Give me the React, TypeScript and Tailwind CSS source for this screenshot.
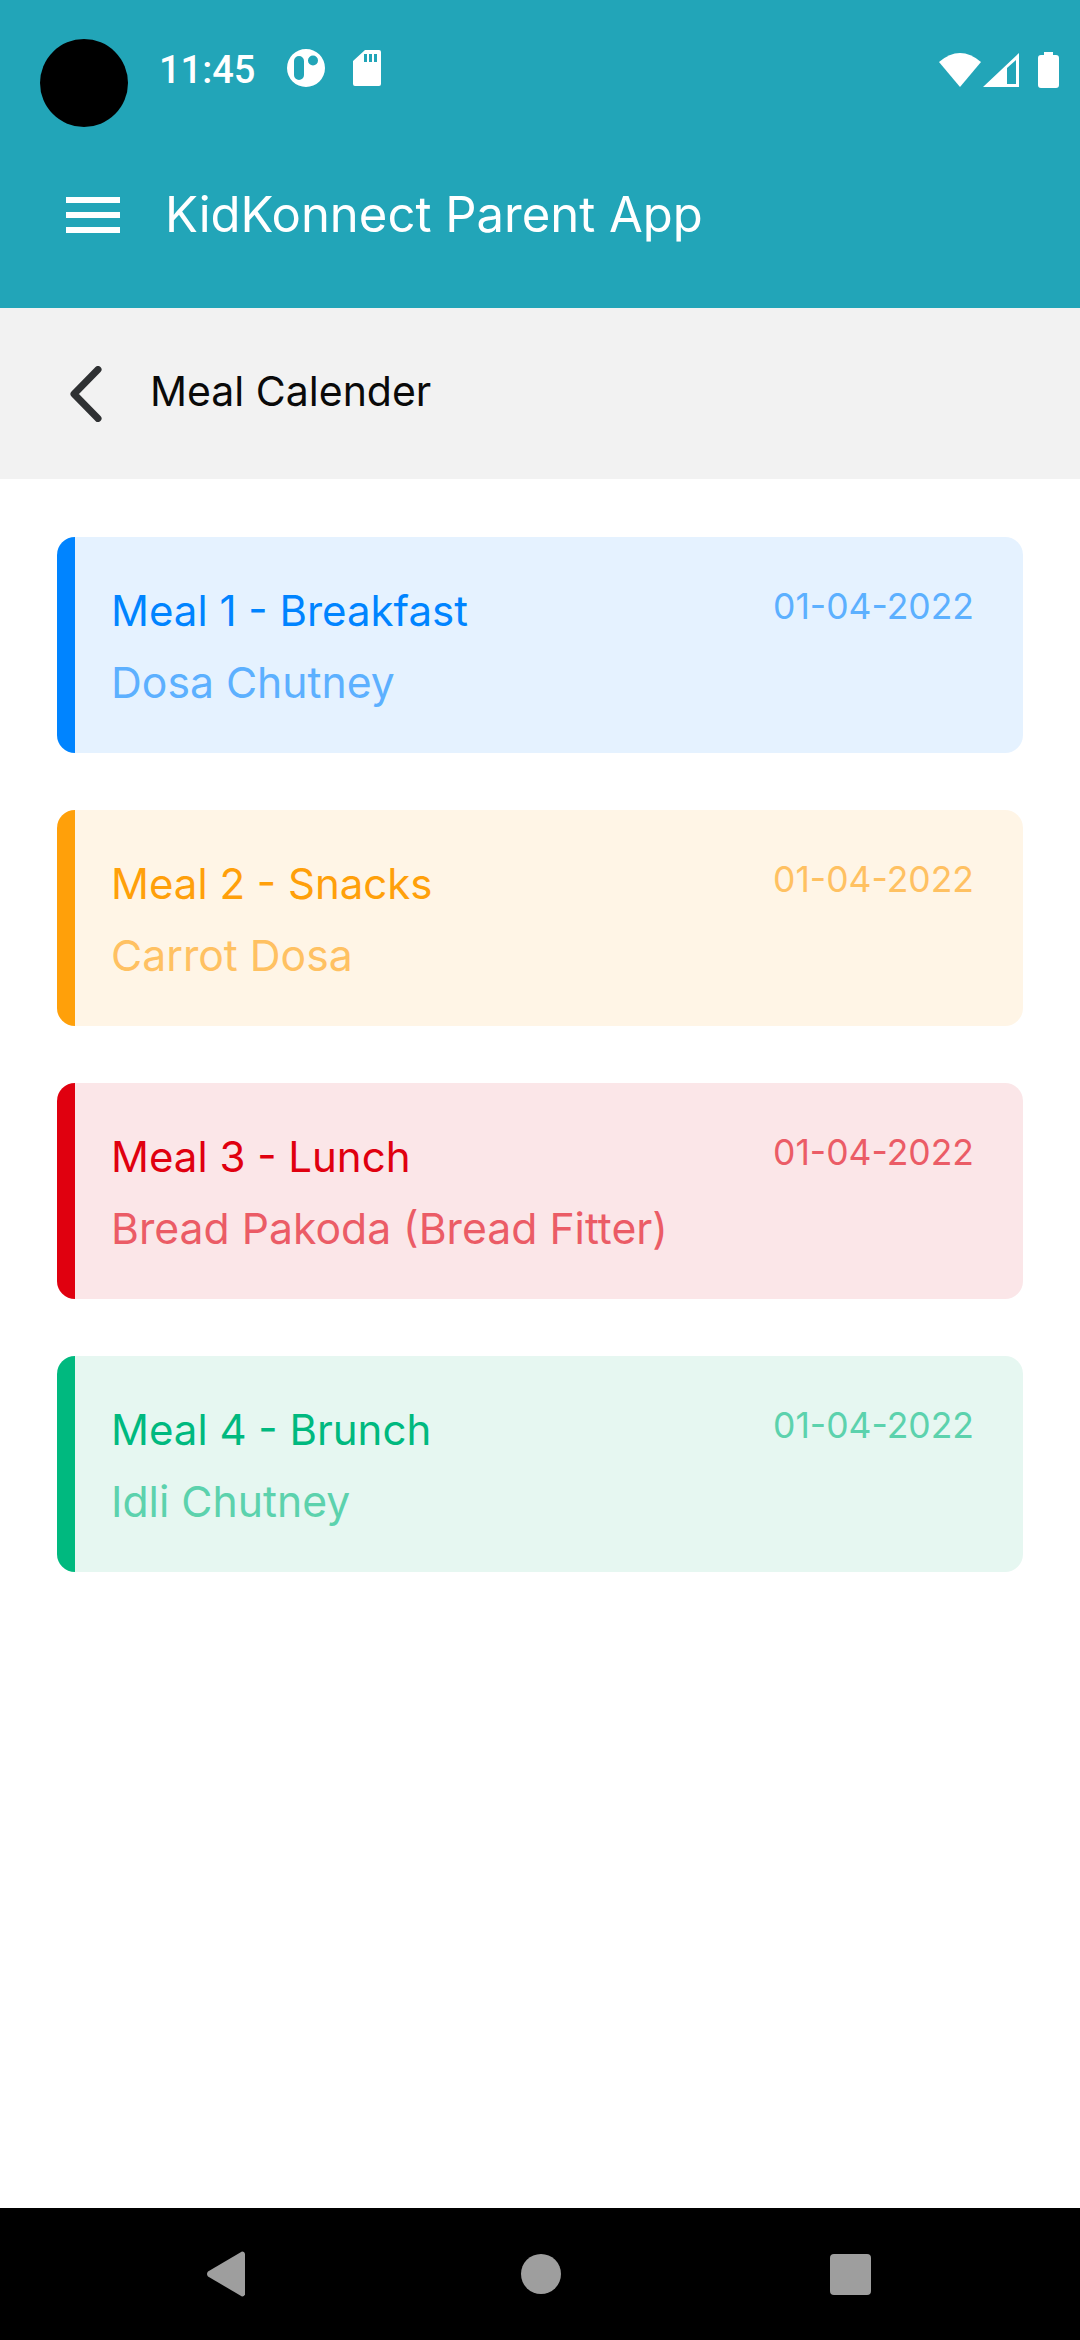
const meals = [
  { title: 'Meal 1 - Breakfast', food: 'Dosa Chutney', card: 'bg-[#e5f2ff] border-[#0084ff]', main: 'text-[#0084ff]', soft: 'text-[#5cb0ff]' },
  { title: 'Meal 2 - Snacks', food: 'Carrot Dosa', card: 'bg-[#fff5e6] border-[#ffa00a]', main: 'text-[#ffa00a]', soft: 'text-[#ffc162]' },
  { title: 'Meal 3 - Lunch', food: 'Bread Pakoda (Bread Fitter)', card: 'bg-[#fbe6e8] border-[#e0000f]', main: 'text-[#e0000f]', soft: 'text-[#eb5c66]' },
  { title: 'Meal 4 - Brunch', food: 'Idli Chutney', card: 'bg-[#e6f7f1] border-[#00b97f]', main: 'text-[#00b97f]', soft: 'text-[#5cd2ad]' },
]

function StatusBar() {
  return (
    <div className="relative flex h-[93px] items-end justify-between pb-[5px] pl-[159px] pr-[21px]">
      <div className="absolute left-[40px] top-[39px] h-[88px] w-[88px] rounded-full bg-black" />
      <div className="flex items-center">
        <span className="pt-[4px] font-['Roboto',sans-serif] text-[38px] leading-[36px] font-medium text-white">11:45</span>
        <svg className="ml-[32px]" width="38" height="38" viewBox="0 0 38 38">
          <path fill="#fff" fillRule="evenodd" d="M19 0a19 19 0 1 0 0 38a19 19 0 1 0 0-38zM12 7a5 5 0 0 1 5 5v14a5 5 0 0 1-10 0V12a5 5 0 0 1 5-5zM26 6.500a5 5 0 1 1 0 10a5 5 0 1 1 0-10z" />
        </svg>
        <svg className="ml-[28px]" width="28" height="36" viewBox="0 0 28 36">
          <path fill="#fff" fillRule="evenodd" d="M12 0h14a2 2 0 0 1 2 2v32a2 2 0 0 1-2 2H2a2 2 0 0 1-2-2V11zM11 4v8h3V4zM16 4v8h3V4zM21 4v8h3V4z" />
        </svg>
      </div>
      <div className="flex items-center">
        <svg width="42" height="34" viewBox="0 0 42 34">
          <path fill="#fff" d="M0 9Q21-9 42 9L21 34z" />
        </svg>
        <svg className="ml-[2px]" width="36" height="34" viewBox="0 0 36 34">
          <path fill="#fff" fillRule="evenodd" d="M36 0v34H0zM33 7L24 15v16h9z" />
        </svg>
        <svg className="ml-[19px]" width="21" height="36" viewBox="0 0 21 36">
          <path fill="#fff" d="M6 0h9v3h3a3 3 0 0 1 3 3v27a3 3 0 0 1-3 3H3a3 3 0 0 1-3-3V6a3 3 0 0 1 3-3h3z" />
        </svg>
      </div>
    </div>
  )
}

export default function App() {
  return (
    <div className="flex h-[2340px] w-[1080px] flex-col bg-white font-['Inter',sans-serif]">
      <header className="h-[308px] bg-[#22a5b8]">
        <StatusBar />
        <div className="flex items-center pl-[66px] pt-[92px]">
          <div className="flex w-[54px] flex-col gap-[9px]">
            <div className="h-[6px] bg-white" />
            <div className="h-[6px] bg-white" />
            <div className="h-[6px] bg-white" />
          </div>
          <h1 className="ml-[45px] text-[49px] leading-[60px] text-white">KidKonnect Parent App</h1>
        </div>
      </header>

      <div className="flex h-[171px] items-center bg-[#f2f2f2] pl-[68px]">
        <svg width="34" height="56" viewBox="0 0 34 56" fill="none">
          <path d="M30 3.500L6 28l24 24.500" stroke="#2f3133" strokeWidth="7" strokeLinecap="round" strokeLinejoin="round" />
        </svg>
        <span className="ml-[48px] pb-[6px] text-[41px] leading-[50px] text-[#0a0a0a]">Meal Calender</span>
      </div>

      <main className="flex flex-1 flex-col gap-[57px] px-[57px] pt-[58px]">
        {meals.map((meal) => (
          <div key={meal.title} className={`flex h-[216px] justify-between rounded-[18px] border-l-[18px] pl-[36px] pr-[49px] pt-[47px] ${meal.card}`}>
            <div>
              <div className={`text-[42px] leading-[54px] ${meal.main}`}>{meal.title}</div>
              <div className={`mt-[18px] text-[42.700px] leading-[54px] ${meal.soft}`}>{meal.food}</div>
            </div>
            <div className={`text-[35.500px] leading-[46px] ${meal.soft}`}>01-04-2022</div>
          </div>
        ))}
      </main>

      <nav className="flex h-[132px] items-center bg-black">
        <svg className="ml-[207px]" width="38" height="46" viewBox="0 0 38 46">
          <path fill="#9e9e9e" d="M35 0.500a3 3 0 0 1 3 2v41a3 3 0 0 1-3 2L1 25.500a4 4 0 0 1 0-5z" />
        </svg>
        <div className="ml-[276px] h-[40px] w-[40px] rounded-full bg-[#9e9e9e]" />
        <div className="ml-[269px] h-[41px] w-[41px] rounded-[4px] bg-[#9e9e9e]" />
      </nav>
    </div>
  )
}
